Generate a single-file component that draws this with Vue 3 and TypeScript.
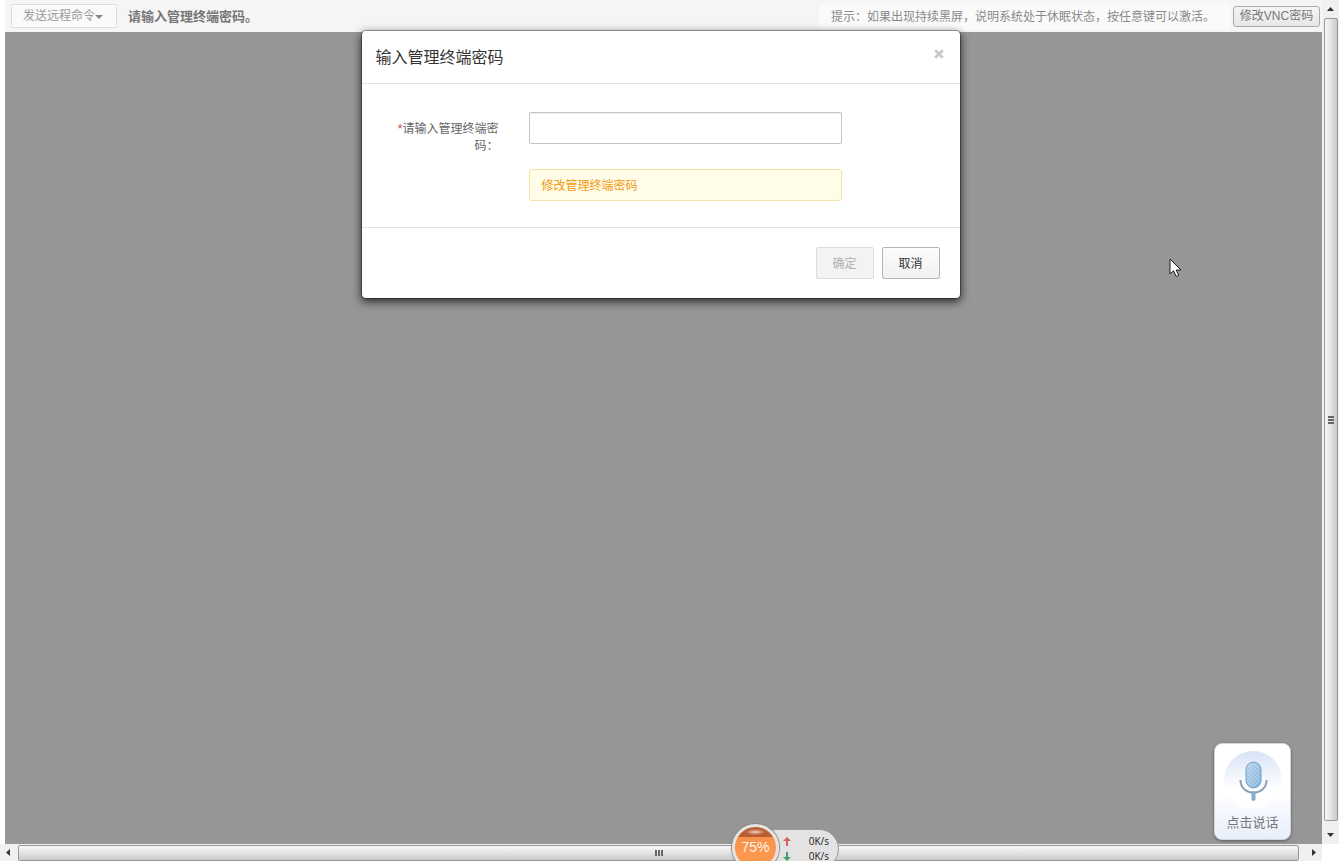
<script setup lang="ts">
import { ref } from 'vue'

const password = ref('')
const progress = ref(75)
</script>

<template>
  <div class="window">
    <main class="console">
      <header class="toolbar">
        <button class="command" type="button">发送远程命令<span class="caret"></span></button>
        <strong class="status">请输入管理终端密码。</strong>
        <p class="hint">提示：如果出现持续黑屏，说明系统处于休眠状态，按任意键可以激活。</p>
        <button class="vnc" type="button">修改VNC密码</button>
      </header>
      <div class="screen"></div>
    </main>

    <div class="bar vertical" aria-hidden="true">
      <svg class="arrow" width="17" height="17" viewBox="0 0 17 17"><path d="M5 11 8.500 7 12 11z" fill="#333" /></svg>
      <div class="thumb"><i></i><i></i><i></i></div>
      <svg class="arrow" width="17" height="17" viewBox="0 0 17 17"><path d="M5 6h7L8.500 10z" fill="#333" /></svg>
    </div>
    <div class="bar horizontal" aria-hidden="true">
      <svg class="arrow" width="17" height="17" viewBox="0 0 17 17"><path d="M10 5v7L6 8.500z" fill="#333" /></svg>
      <div class="thumb"><i></i><i></i><i></i></div>
      <svg class="arrow" width="17" height="17" viewBox="0 0 17 17"><path d="M7 5v7l4-3.500z" fill="#333" /></svg>
    </div>

    <form class="dialog" role="dialog" aria-labelledby="dialog-title" @submit.prevent>
      <header class="dialog-head">
        <h1 id="dialog-title">输入管理终端密码</h1>
        <button class="close" type="button" aria-label="关闭">
          <svg width="10" height="10" viewBox="0 0 10 10"><path d="M1.200 1.200 8.800 8.800M8.800 1.200 1.200 8.800" stroke="#c8c8c8" stroke-width="2.700" /></svg>
        </button>
      </header>
      <div class="fields">
        <label for="terminal-password"><span class="required">*</span>请输入管理终端密码：</label>
        <div class="controls">
          <input id="terminal-password" v-model="password" type="password" />
          <p class="notice">修改管理终端密码</p>
        </div>
      </div>
      <footer class="dialog-foot">
        <button class="action" type="submit" disabled>确定</button>
        <button class="action" type="button">取消</button>
      </footer>
    </form>

    <button class="voice" type="button">
      <svg width="58" height="60" viewBox="0 0 58 60" aria-hidden="true">
        <defs>
          <linearGradient id="halo" x1="0" y1="0" x2="0" y2="1">
            <stop offset="0" stop-color="#d9e3f6" />
            <stop offset=".65" stop-color="#fff" />
          </linearGradient>
          <linearGradient id="capsule" x1="0" y1="0" x2="1" y2="1">
            <stop offset="0" stop-color="#b9d5ea" />
            <stop offset="1" stop-color="#7eb0dc" />
          </linearGradient>
          <pattern id="mesh" width="4" height="4" patternUnits="userSpaceOnUse">
            <circle cx="1" cy="1" r=".7" fill="#cfe2f1" />
            <circle cx="3" cy="3" r=".7" fill="#cfe2f1" />
          </pattern>
        </defs>
        <circle cx="29" cy="30" r="29" fill="url(#halo)" />
        <rect x="22" y="12" width="15" height="26" rx="7.500" fill="url(#capsule)" stroke="#75a2c6" />
        <rect x="23.500" y="13.500" width="12" height="23" rx="6" fill="url(#mesh)" />
        <path d="M16.500 30c0 17 26 17 26 0" fill="none" stroke="#8b9fb5" stroke-width="2" />
        <path d="M29.500 43v6" stroke="#83add0" stroke-width="4" stroke-linecap="round" />
      </svg>
      <span>点击说话</span>
    </button>

    <aside class="monitor">
      <div class="rates">
        <div class="rate">
          <svg width="8" height="9" viewBox="0 0 8 9"><path d="M4 0 8 4H5v5H3V4H0z" fill="#d4605a" /></svg>
          <span>0K/s</span>
        </div>
        <div class="rate">
          <svg width="8" height="9" viewBox="0 0 8 9"><path d="M4 9 0 5h3V0h2v5h3z" fill="#3f9e6b" /></svg>
          <span>0K/s</span>
        </div>
      </div>
      <div class="ball"><span>{{ progress }}%</span></div>
    </aside>

    <svg class="pointer" width="13" height="20" viewBox="0 0 13 20" aria-hidden="true">
      <path d="M1 1v15l3.500-3.300L7.200 18.500l2.500-1.200L7.200 12H12z" fill="#fff" stroke="#1c1c28" />
    </svg>
  </div>
</template>

<style>
body {
  margin: 0;
  background: #fff;
}
</style>

<style scoped>
.window {
  position: relative;
  display: grid;
  grid-template: minmax(0, 1fr) 17px / minmax(0, 1fr) 17px;
  height: 100vh;
  overflow: hidden;
  font-family: "Liberation Sans", "Noto Sans CJK SC", sans-serif;
  font-size: 12px;
  line-height: 17px;
  color: #666;
}
button,
input {
  box-sizing: border-box;
  font: inherit;
}
h1,
p {
  margin: 0;
}
.console {
  display: flex;
  flex-direction: column;
  margin-left: 5px;
}
.toolbar {
  display: flex;
  align-items: center;
  box-sizing: border-box;
  height: 32px;
  padding: 0 2px 0 6px;
  background: #f5f5f5;
}
.command {
  display: flex;
  align-items: center;
  justify-content: center;
  width: 106px;
  height: 24px;
  padding: 1px 2px 0 0;
  border: 1px solid #ddd;
  border-radius: 2px;
  background: #fafafa;
  color: #999;
}
.caret {
  border: 4px solid transparent;
  border-top-color: #888;
  border-bottom: 0;
}
.status {
  margin-left: 11px;
  font-size: 13px;
  color: #777;
}
.hint {
  margin-left: auto;
  margin-right: 2px;
  padding: 6px 16px 4px 12px;
  border-radius: 4px;
  background: #fafafa;
  color: #8a8a8a;
}
.vnc {
  width: 87px;
  height: 21px;
  padding: 1px 0 0;
  border: 1px solid #aaa;
  border-radius: 3px;
  background: linear-gradient(#f5f5f5, #e7e7e7);
  color: #777;
}
.screen {
  flex: 1;
  background: #969696;
}
.bar {
  display: flex;
  background: #f0f0f0;
}
.vertical {
  flex-direction: column;
}
.arrow {
  flex: none;
}
.thumb {
  flex: 1;
  display: flex;
  align-items: center;
  justify-content: center;
  gap: 1px;
  border: 1px solid #999;
  border-radius: 2px;
}
.vertical .thumb {
  flex-direction: column;
  margin: 1px 1px 6px 2px;
  background: linear-gradient(90deg, #f7f7f7, #e5e5e5 45%, #c9c9c9);
}
.horizontal .thumb {
  margin: 1px 6px 0 1px;
  background: linear-gradient(#f7f7f7, #e5e5e5 45%, #c9c9c9);
}
.thumb i {
  width: 6px;
  height: 2px;
  background: #666;
}
.horizontal i {
  width: 2px;
  height: 6px;
}
.dialog {
  position: absolute;
  top: 30px;
  left: 50%;
  box-sizing: border-box;
  width: 600px;
  margin-left: -309px;
  border: 1px solid rgba(0, 0, 0, 0.3);
  border-radius: 5px;
  background: #fff;
  background-clip: padding-box;
  box-shadow: 0 3px 9px rgba(0, 0, 0, 0.7);
}
.dialog-head {
  display: flex;
  justify-content: space-between;
  box-sizing: border-box;
  height: 53px;
  padding: 14px 16px 0 14px;
  border-bottom: 1px solid #e2e2e2;
}
.dialog-head h1 {
  padding-top: 1px;
  font-size: 16px;
  line-height: 24px;
  font-weight: 400;
  color: #333;
}
.close {
  display: flex;
  align-items: center;
  height: 18px;
  padding: 0;
  border: 0;
  background: none;
}
.fields {
  display: flex;
  gap: 30px;
  padding: 28px 118px 26px 35px;
}
.fields label {
  width: 102px;
  padding-top: 9px;
  text-align: right;
}
.required {
  color: #e0304f;
}
.controls {
  flex: 1;
}
.controls input {
  display: block;
  width: 100%;
  height: 32px;
  padding: 0 10px;
  border: 1px solid #c4c4c4;
  border-radius: 2px;
  background: #fff;
  box-shadow: inset 0 1px 1px rgba(0, 0, 0, 0.07);
}
.notice {
  box-sizing: border-box;
  height: 32px;
  margin-top: 25px;
  padding: 8px 12px 5px;
  border: 1px solid #f4e3a8;
  border-radius: 3px;
  background: #fffce8;
  color: #f19b12;
}
.dialog-foot {
  display: flex;
  justify-content: flex-end;
  gap: 8px;
  padding: 19px 20px;
  border-top: 1px solid #e2e2e2;
}
.action {
  width: 58px;
  height: 32px;
  padding: 2px 0 0;
  border: 1px solid #b5b5b5;
  border-radius: 2px;
  background: linear-gradient(#fcfcfc, #f0f0f0);
  color: #333;
}
.action:disabled {
  border-color: #ddd;
  background: #f3f3f3;
  color: #b0b0b0;
}
.voice {
  position: absolute;
  right: 48px;
  bottom: 21px;
  display: flex;
  flex-direction: column;
  align-items: center;
  gap: 4px;
  width: 77px;
  height: 97px;
  padding: 6px 0 0;
  border: 1px solid #d0d4dc;
  border-radius: 8px;
  background: linear-gradient(#fff 50%, #e8eefb);
  box-shadow: 0 1px 3px rgba(0, 0, 0, 0.4);
  font-size: 13px;
  color: #777;
}
.voice svg {
  flex: none;
}
.monitor {
  position: absolute;
  left: 732px;
  bottom: -11px;
  width: 107px;
  height: 48px;
}
.rates {
  display: flex;
  flex-direction: column;
  gap: 5px;
  box-sizing: border-box;
  height: 40px;
  margin: 5px 0 0 24px;
  padding: 6px 9px 0 26px;
  border: 1px solid #999;
  border-radius: 20px;
  background: #e3e3e3;
  font-family: "Open Sans", sans-serif;
  font-size: 10px;
  line-height: 10px;
  color: #222;
}
.rate {
  display: flex;
  align-items: center;
  justify-content: space-between;
}
.ball {
  position: absolute;
  top: 0;
  left: 0;
  display: flex;
  align-items: center;
  justify-content: center;
  box-sizing: border-box;
  width: 47px;
  height: 47px;
  border: 3px solid #e5e2df;
  border-radius: 50%;
  background:
    radial-gradient(ellipse 10px 3px at 50% 5px, #eed0c0, transparent),
    linear-gradient(#bb5d32 0 10px, #f6924b 10px, #ff9b50);
  box-shadow: 0 0 1px 1px #888;
  font-size: 14px;
  color: #fff4e8;
}
.pointer {
  position: absolute;
  left: 1169px;
  top: 258px;
}
</style>
